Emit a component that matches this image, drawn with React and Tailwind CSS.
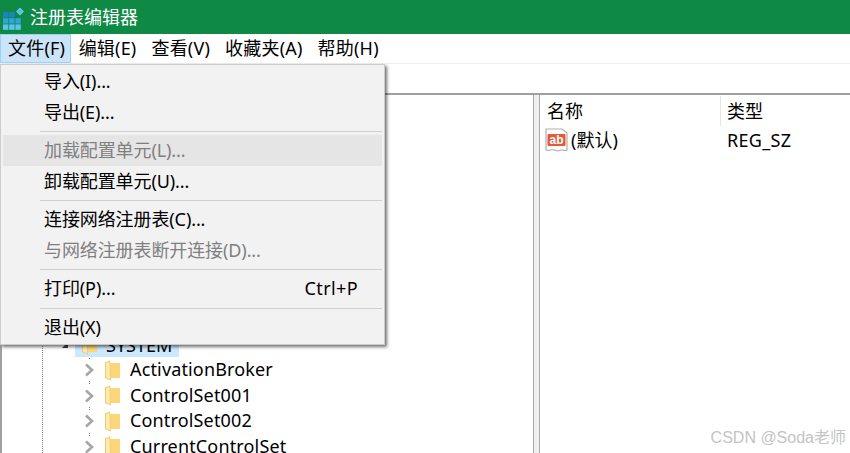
import React from "react";

const MENU_BAR = [
  { label: "文件(F)", active: true, pad: "pl-[7px] pr-[5px]" },
  { label: "编辑(E)", pad: "px-[6.5px]" },
  { label: "查看(V)", pad: "px-[6.5px]" },
  { label: "收藏夹(A)", pad: "px-[6.5px]" },
  { label: "帮助(H)", pad: "px-[6.5px]" },
];

const CHILD_KEYS = ["ActivationBroker", "ControlSet001", "ControlSet002", "CurrentControlSet"];

function RegeditIcon() {
  const cells = [];
  for (let r = 0; r < 3; r++) {
    for (let c = 0; c < 3; c++) {
      if (r === 0 && c === 2) continue;
      cells.push(
        <rect
          key={`${r}-${c}`}
          x={2 + c * 6.2}
          y={10 + r * 6.2}
          width="5.4"
          height="5.4"
          fill={r === 2 ? "#5cc4f2" : r === 1 ? "#2ea3df" : "#1886c4"}
        />,
      );
    }
  }
  return (
    <svg width="24" height="30" viewBox="0 0 24 30" className="shrink-0">
      {cells}
      <path d="M19 6l3.5 3.5L19 13l-3.5-3.5z" fill="#55bdf0" stroke="#a8e0fa" strokeWidth="0.6" />
    </svg>
  );
}

function Chevron() {
  return (
    <span className="flex w-[20px] h-[22px] items-center justify-center bg-white shrink-0">
      <svg width="11" height="14" viewBox="0 0 11 14">
        <path d="M2 1.500 8 7 2 12.500" fill="none" stroke="#a6a6a6" strokeWidth="2.600" />
      </svg>
    </span>
  );
}

function Folder() {
  return (
    <svg width="15" height="21" viewBox="0 0 15 21" className="shrink-0">
      <path d="M4 3h11v15H5z" fill="#fbd67a" />
      <path d="M0 2.500 5 0.500 6 20.500 0 18z" fill="#f0c25a" />
      <path d="M0.800 3 4.500 1.500 5.400 19.500 0.800 17.500z" fill="#fee9ae" />
    </svg>
  );
}

function AbIcon() {
  return (
    <svg width="24" height="26" viewBox="0 0 24 26" className="shrink-0">
      <path
        d="M1 2h16l5 4v17c-2 1.500-4-.5-6 0s-3 1.500-5 .5-3-1-5-.5-4 .5-5 0z"
        fill="#fdfdfd"
        stroke="#b0b0b0"
        strokeWidth="1.200"
      />
      <rect x="2.500" y="7" width="18" height="12" rx="1" fill="#e4593a" />
      <text x="11.500" y="17" textAnchor="middle" fontSize="12" fontWeight="700" fill="#fff" fontFamily="Liberation Sans, sans-serif">
        ab
      </text>
    </svg>
  );
}

function MenuItem({ label, shortcut, disabled, highlight }) {
  return (
    <div className={`h-[31px] flex items-center justify-between pb-[2px] pl-[41px] pr-[24px] mx-[2px] tracking-[-0.1px] ${highlight ? "bg-[#e5e5e5]" : ""} ${disabled ? "text-[#808080]" : "text-black"}`}>
      <span>{label}</span>
      {shortcut && <span className="tracking-[0.4px]">{shortcut}</span>}
    </div>
  );
}

function MenuSep({ size = "h-[7px]" }) {
  return (
    <div className={`flex items-center pl-[39px] pr-[2px] ${size}`}>
      <div className="h-px w-full bg-[#cfcfcf]" />
    </div>
  );
}

function FileMenu() {
  return (
    <div className="absolute left-0 top-[64px] w-[385px] h-[281px] bg-[#f2f2f2] border border-[#cccccc] pt-[1px] shadow-[2px_2px_3px_rgba(0,0,0,0.55)]">
      <MenuItem label="导入(I)..." />
      <MenuItem label="导出(E)..." />
      <MenuSep />
      <MenuItem label="加载配置单元(L)..." disabled highlight />
      <MenuItem label="卸载配置单元(U)..." />
      <MenuSep />
      <MenuItem label="连接网络注册表(C)..." />
      <MenuItem label="与网络注册表断开连接(D)..." disabled />
      <MenuSep />
      <MenuItem label="打印(P)..." shortcut="Ctrl+P" />
      <MenuSep size="h-[8px]" />
      <MenuItem label="退出(X)" />
    </div>
  );
}

function TreePane() {
  return (
    <div className="w-[533px] h-full overflow-hidden border-l-2 border-[#a0a0a0] pl-[40px] shrink-0">
      <div className="h-full border-l border-dotted border-[#808080] pt-[237px]">
        <div className="h-[25.5px] flex items-center pl-[12px]">
          <span className="w-[20px] flex justify-center shrink-0">
            <svg width="8" height="8" viewBox="0 0 8 8">
              <path d="M7 1v6H1z" fill="#404040" />
            </svg>
          </span>
          <div className="h-[24px] w-[104px] bg-[#cce8ff] flex items-center pl-[7px] gap-[9px]">
            <Folder />
            <span>SYSTEM</span>
          </div>
        </div>
        <div className="ml-[46px] border-l border-dotted border-[#808080]">
          {CHILD_KEYS.map((name) => (
            <div key={name} className="h-[25.5px] flex items-center -ml-[11px] whitespace-nowrap">
              <Chevron />
              <span className="ml-[6px] flex items-center">
                <Folder />
              </span>
              <span className="ml-[10px] pb-[2px] tracking-[0.15px]">{name}</span>
            </div>
          ))}
        </div>
      </div>
    </div>
  );
}

function ValuePane() {
  return (
    <div className="flex-1 min-w-0">
      <div className="h-[31px] flex items-center">
        <div className="w-[180px] pl-[7px]">名称</div>
        <div className="h-[30px] border-l border-[#e5e5e5] pl-[6px] flex items-center">类型</div>
      </div>
      <div className="h-[28px] flex items-center pl-[5px]">
        <div className="w-[175px] flex items-center gap-[2px]">
          <AbIcon />
          <span>(默认)</span>
        </div>
        <span className="pl-[7px] tracking-[0.3px]">REG_SZ</span>
      </div>
    </div>
  );
}

export default function App() {
  return (
    <div className="relative w-[850px] h-[453px] overflow-hidden bg-white flex flex-col text-[18px] leading-none text-black font-['Noto_Sans','Noto_Sans_CJK_SC',sans-serif]">
      <div className="h-[34px] bg-[#0f8a45] flex items-center pl-[1px] gap-[5px] text-white shrink-0">
        <RegeditIcon />
        <span>注册表编辑器</span>
      </div>
      <div className="h-[30px] flex items-stretch border-b border-[#f0f0f0] shrink-0 tracking-[0.2px]">
        {MENU_BAR.map((item) => (
          <div
            key={item.label}
            className={`flex items-center pb-[1px] border ${item.pad} ${item.active ? "bg-[#cce4f7] border-[#99d1ff]" : "border-transparent"}`}
          >
            {item.label}
          </div>
        ))}
      </div>
      <div className="h-[31px] border-b-2 border-[#a0a0a0] shrink-0" />
      <div className="flex-1 flex min-h-0">
        <TreePane />
        <div className="w-[7px] bg-[#f0f0f0] border-x border-[#a8a8a8] shrink-0" />
        <ValuePane />
      </div>
      <FileMenu />
      <div className="absolute right-[4px] bottom-[7px] text-[16px] text-[#c4c4c4] font-['Liberation_Sans','Noto_Sans_CJK_SC',sans-serif]">CSDN @Soda老师</div>
    </div>
  );
}
